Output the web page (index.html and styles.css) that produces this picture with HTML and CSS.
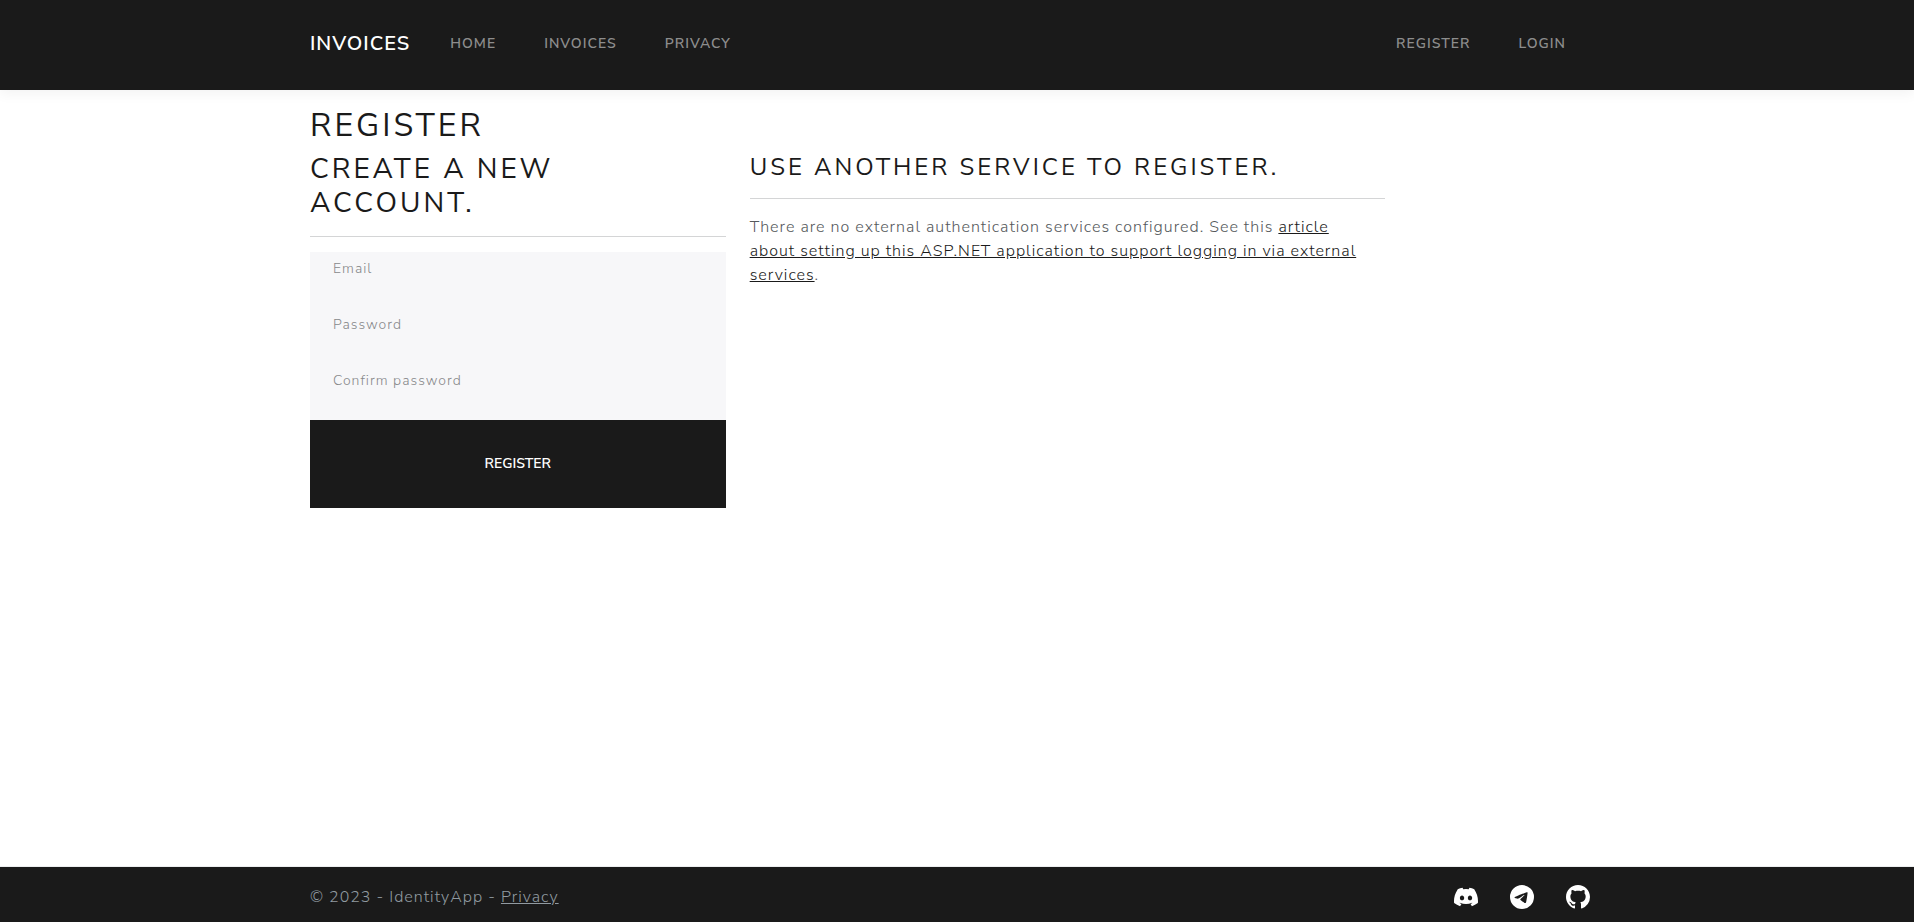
FILE: index.html
```html
<!DOCTYPE html>
<html lang="en">
<head>
<meta charset="utf-8">
<meta name="viewport" content="width=device-width, initial-scale=1">
<title>Register - IdentityApp</title>
<link rel="stylesheet" href="styles.css">
</head>
<body>
<header class="site-header">
  <nav class="container navbar">
    <a class="brand" href="#">Invoices</a>
    <ul class="nav-list nav-main">
      <li><a class="nav-link" href="#">Home</a></li>
      <li><a class="nav-link" href="#">Invoices</a></li>
      <li><a class="nav-link" href="#">Privacy</a></li>
    </ul>
    <ul class="nav-list">
      <li><a class="nav-link" href="#">Register</a></li>
      <li><a class="nav-link" href="#">Login</a></li>
    </ul>
  </nav>
</header>
<main class="container main">
  <h1>Register</h1>
  <div class="row">
    <section class="col-account">
      <form>
        <h2>Create a new account.</h2>
        <hr>
        <div class="field">
          <label for="email">Email</label>
          <input id="email" type="email" autocomplete="username">
        </div>
        <div class="field">
          <label for="password">Password</label>
          <input id="password" type="password" autocomplete="new-password">
        </div>
        <div class="field">
          <label for="confirm">Confirm password</label>
          <input id="confirm" type="password" autocomplete="new-password">
        </div>
        <button class="submit" type="submit">Register</button>
      </form>
    </section>
    <section class="col-service">
      <h3>Use another service to register.</h3>
      <hr>
      <p>There are no external authentication services configured. See this <a href="#">article about setting up this ASP.NET application to support logging in via external services</a>.</p>
    </section>
  </div>
</main>
<footer class="site-footer">
  <div class="container footer-row">
    <div>© 2023 - IdentityApp - <a href="#">Privacy</a></div>
    <div class="social">
      <a href="#" aria-label="Discord"><svg viewBox="0 0 16 16"><path d="M13.545 2.907a13.227 13.227 0 0 0-3.257-1.011.05.05 0 0 0-.052.025c-.141.25-.297.577-.406.833a12.19 12.19 0 0 0-3.658 0 8.258 8.258 0 0 0-.412-.833.051.051 0 0 0-.052-.025c-1.125.194-2.22.534-3.257 1.011a.041.041 0 0 0-.021.018C.356 6.024-.213 9.047.066 12.032c.001.014.01.028.021.037a13.276 13.276 0 0 0 3.995 2.02.05.05 0 0 0 .056-.019c.308-.42.582-.863.818-1.329a.05.05 0 0 0-.01-.059.051.051 0 0 0-.018-.011 8.875 8.875 0 0 1-1.248-.595.05.05 0 0 1-.02-.066.051.051 0 0 1 .015-.019c.084-.063.168-.129.248-.195a.05.05 0 0 1 .051-.007c2.619 1.196 5.454 1.196 8.041 0a.052.052 0 0 1 .053.007c.08.066.164.132.248.195a.051.051 0 0 1-.004.085 8.254 8.254 0 0 1-1.249.594.05.05 0 0 0-.03.03.052.052 0 0 0 .003.041c.24.465.515.909.817 1.329a.05.05 0 0 0 .056.019 13.235 13.235 0 0 0 4.001-2.02.049.049 0 0 0 .021-.037c.334-3.451-.559-6.449-2.366-9.106a.034.034 0 0 0-.02-.019Zm-8.198 7.307c-.789 0-1.438-.724-1.438-1.612 0-.889.637-1.613 1.438-1.613.807 0 1.45.73 1.438 1.613 0 .888-.637 1.612-1.438 1.612Zm5.316 0c-.788 0-1.438-.724-1.438-1.612 0-.889.637-1.613 1.438-1.613.807 0 1.451.73 1.438 1.613 0 .888-.631 1.612-1.438 1.612Z"/></svg></a>
      <a href="#" aria-label="Telegram"><svg viewBox="0 0 16 16"><path d="M16 8A8 8 0 1 1 0 8a8 8 0 0 1 16 0zM8.287 5.906c-.778.324-2.334.994-4.666 2.01-.378.15-.577.298-.595.442-.03.243.275.339.69.47l.175.055c.408.133.958.288 1.243.294.26.006.549-.1.868-.32 2.179-1.471 3.304-2.214 3.374-2.23.05-.012.12-.026.166.016.047.041.042.12.037.141-.03.129-1.227 1.241-1.846 1.817-.193.18-.33.307-.358.336a8.154 8.154 0 0 1-.188.186c-.38.366-.664.64.015 1.088.327.216.589.393.85.571.284.194.568.387.936.629.093.06.183.125.27.187.331.236.63.448.997.414.214-.02.435-.22.547-.82.265-1.417.786-4.486.906-5.751a1.426 1.426 0 0 0-.013-.315.337.337 0 0 0-.114-.217.526.526 0 0 0-.31-.093c-.3.005-.763.166-2.984 1.09z"/></svg></a>
      <a href="#" aria-label="GitHub"><svg viewBox="0 0 16 16"><path d="M8 0C3.58 0 0 3.58 0 8c0 3.54 2.29 6.53 5.47 7.59.4.07.55-.17.55-.38 0-.19-.01-.82-.01-1.49-2.01.37-2.53-.49-2.69-.94-.09-.23-.48-.94-.82-1.13-.28-.15-.68-.52-.01-.53.63-.01 1.08.58 1.23.82.72 1.21 1.87.87 2.33.66.07-.52.28-.87.51-1.07-1.78-.2-3.64-.89-3.64-3.95 0-.87.31-1.59.82-2.15-.08-.2-.36-1.02.08-2.12 0 0 .67-.21 2.2.82.64-.18 1.32-.27 2-.27.68 0 1.36.09 2 .27 1.53-1.04 2.2-.82 2.2-.82.44 1.1.16 1.92.08 2.12.51.56.82 1.27.82 2.15 0 3.07-1.87 3.75-3.65 3.95.29.25.54.73.54 1.48 0 1.07-.01 1.93-.01 2.2 0 .21.15.46.55.38A8.012 8.012 0 0 0 16 8c0-4.42-3.58-8-8-8z"/></svg></a>
    </div>
  </div>
</footer>
</body>
</html>
```
FILE: styles.css
```css
*, *::before, *::after { box-sizing: border-box; }

body {
  margin: 0;
  min-height: 100vh;
  display: flex;
  flex-direction: column;
  background: #fff;
  color: #55595c;
  font-family: "Nunito Sans", Nunito, Lato, sans-serif;
  font-size: 16px;
  font-weight: 300;
  line-height: 24px;
  letter-spacing: 1px;
}

.container {
  width: 100%;
  max-width: 1320px;
  margin: 0 auto;
  padding: 0 12px 0 13px;
}

.site-header {
  background: #1a1a1a;
  box-shadow: 0 4px 12px rgba(0, 0, 0, .05);
}

.navbar {
  display: flex;
  align-items: center;
  min-height: 90px;
  padding-right: 27px;
  padding-bottom: 2px;
}

.brand {
  margin-right: 16px;
  color: #fff;
  font-size: 20px;
  font-weight: 600;
  text-decoration: none;
  text-transform: uppercase;
}

.nav-list {
  display: flex;
  margin: 0;
  padding: 0;
  list-style: none;
}

.nav-main { flex: 1; }

.nav-link {
  display: block;
  padding: 8px 24px;
  color: #8d8d8d;
  font-size: 14px;
  font-weight: 600;
  text-decoration: none;
  text-transform: uppercase;
}

.main {
  flex: 1;
  padding-top: 16px;
  padding-bottom: 16px;
}

h1, h2, h3 {
  margin: 0 0 8px;
  color: #1a1a1a;
  font-weight: 400;
  letter-spacing: 3px;
  text-transform: uppercase;
}

h1 {
  margin-bottom: 6px;
  font-size: 32px;
  line-height: 40px;
}

h2 { font-size: 28px; line-height: 34px; }
h3 { font-size: 24px; line-height: 30px; }

hr {
  margin: 16px 0;
  border: 0;
  border-top: 1px solid #d4d5d6;
}

.col-account hr { margin-bottom: 15px; }

p {
  margin: 0 0 16px;
  padding-right: 12px;
}

p a { color: #1a1a1a; }

.row {
  display: grid;
  grid-template-columns: repeat(12, 1fr);
  gap: 24px;
}

.col-account { grid-column: span 4; }
.col-service { grid-column: span 6; }

.field {
  display: flex;
  flex-direction: column;
  height: 56px;
  padding: 7px 23px 0;
  background: #f7f7f9;
}

.field label {
  color: #88898b;
  font-size: 14px;
  line-height: 20px;
}

.field input {
  width: 100%;
  height: 26px;
  padding: 0;
  border: 0;
  outline: 0;
  background: transparent;
  color: #55595c;
  font: inherit;
}

.submit {
  display: block;
  width: 100%;
  height: 88px;
  padding: 0 0 2px;
  border: 0;
  background: #1a1a1a;
  color: #fff;
  font-family: inherit;
  font-size: 14px;
  font-weight: 600;
  text-transform: uppercase;
}

.site-footer {
  border-top: 1px solid #eceeef;
  background: #1a1a1a;
  color: #919aa1;
}

.site-footer a { color: inherit; }

.footer-row {
  display: flex;
  align-items: center;
  justify-content: space-between;
  min-height: 55px;
  padding-top: 4px;
  padding-right: 27px;
}

.social { display: flex; gap: 32px; }

.site-footer .social a { color: #fff; }

.social svg {
  display: block;
  width: 24px;
  height: 24px;
  fill: currentColor;
}
```
